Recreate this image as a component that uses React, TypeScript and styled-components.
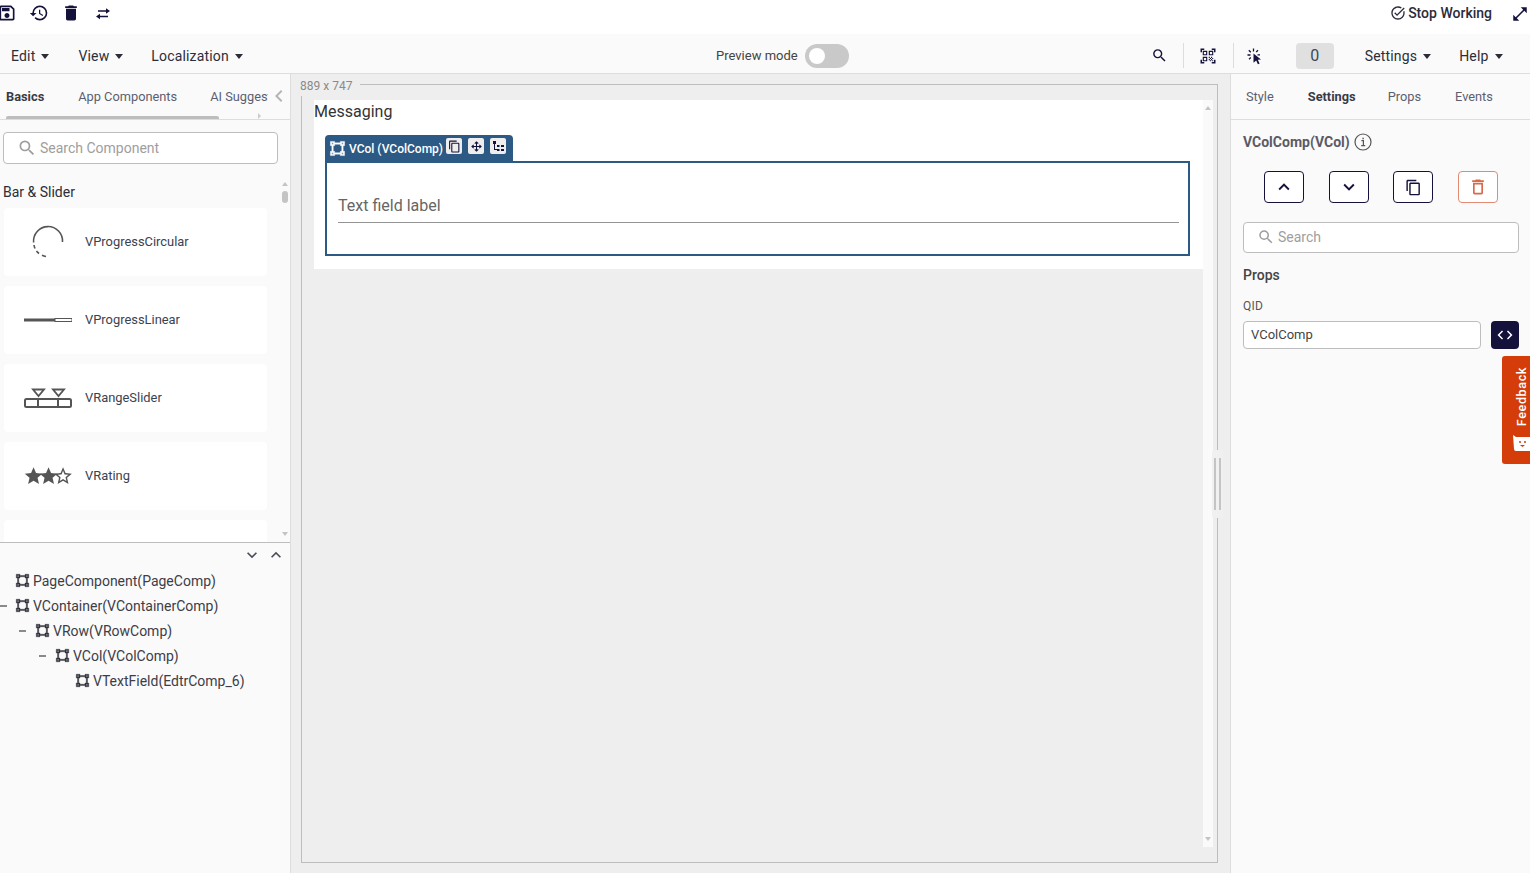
import React from "react";
import styled, { createGlobalStyle } from "styled-components";
import {
  MdOutlineSave, MdHistory, MdDelete, MdSearch, MdOutlineContentCopy, MdDeleteOutline,
  MdKeyboardArrowUp, MdKeyboardArrowDown, MdOpenInFull, MdOutlineTaskAlt, MdCode, MdQrCodeScanner,
  MdChevronLeft,
} from "react-icons/md";

const Global = createGlobalStyle`
  html, body { margin: 0; padding: 0; height: 873px; overflow: hidden; background: #fff; }
  body { font-family: Roboto, "Liberation Sans", sans-serif; color: #333; }
  * { box-sizing: border-box; }
`;

const Page = styled.div`position: relative; width: 1530px; height: 873px; display: flex; flex-direction: column; overflow: hidden;`;
const TopBar = styled.div`height: 34px; flex: none; background: #fff; display: flex; align-items: flex-start; padding: 3px 0 0 0;`;
const TopIcon = styled.span<{ $left: number }>`
  display: flex; width: 20px; height: 20px; align-items: center; justify-content: center; color: #14123a; margin-left: ${(p) => p.$left}px; font-size: 20px;
`;
const StopWorking = styled.div`margin-left: auto; display: flex; align-items: center; height: 20px; font-size: 14px; font-weight: 500; color: #2b2b3a; gap: 2px; margin-right: 38px;`;
const ExpandIcon = styled.span`position: absolute; right: 1px; top: 5px; display: flex; color: #14123a; font-size: 18px;`;

const MenuBar = styled.div`height: 40px; flex: none; background: #fafafa; border-bottom: 1px solid #ddd; display: flex; align-items: center; padding-top: 4px;`;
const MenuLeft = styled.div`flex: 0 0 716px; display: flex; padding-left: 11px;`;
const MenuItem = styled.span<{ $gap?: number }>`
  display: inline-flex; align-items: center; font-size: 14px; color: #2d2d38; margin-right: ${(p) => p.$gap ?? 0}px; white-space: nowrap; letter-spacing: 0.012em;
  &::after { content: ""; margin-left: 6px; margin-top: 2px; border-left: 4.5px solid transparent; border-right: 4.5px solid transparent; border-top: 5px solid #2d2d38; }
`;
const PreviewLabel = styled.span`font-size: 13px; color: #444; margin-right: 7px;`;
const Toggle = styled.span`width: 44px; height: 24px; border-radius: 12px; background: #c9c9c9; display: flex; align-items: center; padding-left: 4px;
  &::before { content: ""; width: 16px; height: 16px; border-radius: 50%; background: #fff; }`;
const MenuRight = styled.div`margin-left: 301px; display: flex; align-items: center; height: 100%;`;
const BarIcon = styled.span<{ $w: number }>`width: ${(p) => p.$w}px; display: flex; justify-content: center; color: #14123a;`;
const VRule = styled.span`width: 1px; height: 25px; background: #ddd;`;
const SearchSpacer = styled.span`width: 13px;`;
const CountBadge = styled.span`width: 38px; height: 26px; margin-left: 19px; margin-right: 31px; border-radius: 4px; background: #e0e0e0; font-size: 16px; color: #3b4a5a; display: flex; align-items: center; justify-content: center;`;

const Body = styled.div`flex: 1; display: flex; min-height: 0;`;

const LeftPanel = styled.aside`width: 291px; flex: none; background: #fafafa; border-right: 1px solid #ddd; display: flex; flex-direction: column;`;
const TabRow = styled.div`position: relative; height: 46px; flex: none; border-bottom: 1px solid #ddd; display: flex; align-items: center; padding-bottom: 1px; overflow: hidden;`;
const Tab = styled.span<{ $active?: boolean; $left: number }>`
  font-size: 12.8px; margin-left: ${(p) => p.$left}px; white-space: nowrap; font-weight: ${(p) => (p.$active ? 700 : 400)}; color: ${(p) => (p.$active ? "#3a3a46" : "#5a6072")};
`;
const ClippedTab = styled(Tab)`width: 58px; overflow: hidden; flex: none;`;
const TabChevron = styled.span`display: flex; color: #b5b5b5; font-size: 24px; margin-left: -1px;`;
const TabScroll = styled.span`position: absolute; left: 6px; bottom: 0; width: 213px; height: 3px; border-radius: 2px 2px 0 0; background: #bdbdbd;`;
const TabScrollArrow = styled.span`position: absolute; left: 258px; bottom: 0; width: 0; height: 0; border-left: 3px solid #ccc; border-top: 3px solid transparent;border-bottom: 3px solid transparent;`;
const SearchWrap = styled.div`padding: 12px 12px 12px 3px; flex: none;`;
const SearchBox = styled.div<{ $h: number }>`
  height: ${(p) => p.$h}px; border: 1px solid #bdbdbd; border-radius: 4px; background: #fff; display: flex; align-items: center; padding: 0 0 1px 13px; gap: 3px; color: #9e9e9e; font-size: 14px;
`;
const ListArea = styled.div`height: 367px; flex: none; display: flex; border-bottom: 1px solid #bdbdbd; overflow: hidden;`;
const ListBody = styled.div`width: 279px; flex: none; padding-left: 3px;`;
const SectionTitle = styled.div`font-size: 14px; color: #2d2d38; height: 32px; line-height: 32px; font-weight: 400;`;
const Card = styled.div`width: 263px; height: 68px; margin: 0 0 10px 1px; background: #fff; border-radius: 4px; display: flex; align-items: center; padding: 0 0 2px 20px; gap: 13px; font-size: 12.9px; color: #3a4250; flex: none;`;
const CardIcon = styled.svg`width: 48px; height: 48px; flex: none; display: block; margin-top: 2px;`;
const Rail = styled.div<{ $bg?: string; $w: number }>`
  position: relative; width: ${(p) => p.$w}px; flex: none; background: ${(p) => p.$bg ?? "transparent"};
`;
const ArrowUp = styled.span`position: absolute; top: 6px; left: 50%; transform: translateX(-50%); border-left: 3.5px solid transparent; border-right: 3.5px solid transparent; border-bottom: 4px solid #c4c4c4;`;
const ArrowDown = styled.span<{ $top?: number }>`position: absolute; ${(p) => (p.$top ? `top: ${p.$top}px;` : "bottom: 6px;")} left: 50%; transform: translateX(-50%); border-left: 3.5px solid transparent; border-right: 3.5px solid transparent; border-top: 4px solid #c4c4c4;`;
const RailThumb = styled.span`position: absolute; left: 3px; top: 15px; width: 6px; height: 12px; border-radius: 3px; background: #c4c4c4;`;

const Tree = styled.div`flex: 1; position: relative; padding-top: 25px;`;
const TreeToggles = styled.div`position: absolute; top: 2px; left: 242px; display: flex; gap: 4px; color: #4a4a58; font-size: 20px;`;
const TreeRow = styled.div<{ $level: number }>`height: 25px; display: flex; align-items: center; padding-left: ${(p) => 15 + p.$level * 20}px; position: relative; font-size: 14px; color: #3d3d48; gap: 3px; white-space: nowrap;`;
const TreeDash = styled.span<{ $shift: number }>`position: absolute; margin-left: ${(p) => p.$shift}px; width: 7px; height: 2px; background: #8a8a8a;`;

const Center = styled.main`flex: 1; background: #eee; display: flex; flex-direction: column; padding: 0 12px 10px 9px; position: relative; min-width: 0;`;
const Ruler = styled.div`height: 22px; flex: none; display: flex;`;
const RulerLabel = styled.span`font-size: 12px; color: #8a8a8a; line-height: 25px; white-space: nowrap;`;
const RulerLine = styled.span`flex: 1; margin: 10px 0 0 8px; border-top: 1px solid #bdbdbd; border-right: 1px solid #bdbdbd;`;
const Frame = styled.div`flex: 1; margin-left: 1px; border: 1px solid #bdbdbd; border-top: 0; display: flex; padding: 4px 4px 15px 12px; min-height: 0;`;
const Canvas = styled.div`width: 889px; flex: none;`;
const Sheet = styled.div`background: #fff; height: 169px; padding: 0 13px 0 11px;`;
const SheetTitle = styled.div`font-size: 16px; color: #333; height: 24px; margin-left: -11px; line-height: 24px;`;
const Selection = styled.div`margin-top: 11px;`;
const SelectionTab = styled.div`width: 188px; height: 26px; background: #2c5a85; border-radius: 4px 4px 0 0; display: flex; align-items: center; padding: 1px 0 0 4px; color: #fff; font-size: 12px; font-weight: 500; white-space: nowrap;`;
const SelectionName = styled.span`margin-left: 3px;`;
const SelectionBtn = styled.span<{ $left: number }>`width: 16px; height: 16px; margin-left: ${(p) => p.$left}px; margin-top: -5px; background: #eee; border-radius: 2px; display: flex; align-items: center; justify-content: center; color: #14123a; font-size: 13px; flex: none;`;
const SelectionBox = styled.div`height: 95px; border: 2px solid #2c5a85; padding: 0 9px 0 11px;`;
const FieldLabel = styled.div`height: 60px; padding-top: 33px; font-size: 16px; line-height: 20px; color: #666; border-bottom: 1px solid #949494;`;
const Handle = styled.div`position: absolute; left: 921px; top: 376px; width: 11px; height: 68px; background: #f0f0f0; display: flex; justify-content: center; align-items: center; gap: 3px; border-radius: 3px;
  &::before, &::after { content: ""; width: 2px; height: 52px; background: #c4c4c4; }`;

const RightPanel = styled.aside`flex: none; width: 300px; background: #fafafa; border-left: 1px solid #ddd; display: flex; flex-direction: column;`;
const RightTabs = styled.div`height: 46px; flex: none; border-bottom: 1px solid #ddd; display: flex; align-items: center; padding-bottom: 1px;`;
const RightBody = styled.div`padding: 0 11px 0 12px;`;
const PanelTitle = styled.div`height: 18px; margin-top: 13px; font-size: 14px; font-weight: 700; color: #5a5a66; display: flex; align-items: center; gap: 4px;`;
const ActionRow = styled.div`margin-top: 20px; margin-left: 21px; display: flex; gap: 25px;`;
const ActionBtn = styled.span<{ $danger?: boolean; $nudge?: number; $size?: number }>`width: 40px; height: 32px; border-radius: 4px; border: 1px solid ${(p) => (p.$danger ? "#e28a72" : "#14123a")}; color: ${(p) => (p.$danger ? "#d9694a" : "#14123a")}; background: #fff; display: flex; align-items: center; justify-content: center; font-size: ${(p) => p.$size ?? 22}px; margin-left: ${(p) => p.$nudge ?? 0}px;`;
const RightSearch = styled.div`margin-top: 19px;`;
const PropsTitle = styled.div`margin-top: 13px; font-size: 14px; font-weight: 500; color: #444; line-height: 18px;`;
const QidLabel = styled.div`margin-top: 14px; font-size: 12px; color: #555; line-height: 16px; letter-spacing: 0.02em;`;
const QidRow = styled.div`margin-top: 7px; display: flex; gap: 10px;`;
const QidInput = styled.div`width: 238px; height: 28px; border: 1px solid #bdbdbd; border-radius: 4px; background: #fff; font-size: 13px; color: #444; display: flex; align-items: center; padding: 0 0 2px 7px;`;
const CodeBtn = styled.span`width: 28px; height: 28px; border-radius: 4px; background: #14123a; color: #fff; display: flex; align-items: center; justify-content: center; font-size: 18px;`;
const Feedback = styled.div`position: absolute; right: 0; top: 356px; width: 28px; height: 108px; background: #d43c0a; border-radius: 3px 0 0 3px; color: #fff; display: flex; flex-direction: column; align-items: center; padding-top: 11px; gap: 9px;`;
const FeedbackText = styled.span`writing-mode: vertical-rl; transform: rotate(180deg); font-size: 12.6px; font-weight: 500; letter-spacing: 0.6px; margin-left: 11px; line-height: 14px;`;
const FeedbackFace = styled.svg`width: 17px; height: 16px; margin-left: 11px; flex: none;`;

const VSQ = "M2,2H8V4H16V2H22V8H20V16H22V22H16V20H8V22H2V16H4V8H2V2M16,8V6H8V8H6V16H8V18H16V16H18V8H16M4,4V6H6V4H4M18,4V6H20V4H18M4,18V20H6V18H4M18,18V20H20V18H18Z";
const Vector = ({ size = 15, color = "#33333f" }: { size?: number; color?: string }) => (
  <svg width={size} height={size} viewBox="0 0 24 24" fill={color} stroke={color} strokeWidth="0.6" style={{ flex: "none" }}><path d={VSQ} /></svg>
);
const STAR = "M12,17.27L18.18,21L16.54,13.97L22,9.24L14.81,8.62L12,2L9.19,8.62L2,9.24L7.45,13.97L5.82,21L12,17.27Z";
const STARO = "M12,15.39L8.24,17.66L9.23,13.38L5.91,10.5L10.29,10.13L12,6.09L13.71,10.13L18.09,10.5L14.77,13.38L15.76,17.66M22,9.24L14.81,8.62L12,2L9.19,8.62L2,9.24L7.45,13.97L5.82,21L12,17.27L18.18,21L16.54,13.97L22,9.24Z";

const ClickIcon = () => (
  <svg width="18" height="18" viewBox="0 0 18 18" fill="#14123a">
    <path d="M7.5 6.5 L15 12.4 L11.8 12.8 L13.6 16.4 L11.9 17.2 L10.2 13.6 L7.5 15.8Z" />
    <path d="M7.5 1.5v3M2.8 3.2l2 2M1.5 8h3M3 12.2l1.8-1.6M12 3.2l-1.8 1.8M14 7.8h-2.5" stroke="#14123a" strokeWidth="1.3" fill="none" />
  </svg>
);

export default function App() {
  return (
    <Page>
      <Global />
      <TopBar>
        <TopIcon $left={-3}><MdOutlineSave /></TopIcon>
        <TopIcon $left={12}><MdHistory /></TopIcon>
        <TopIcon $left={12}><MdDelete /></TopIcon>
        <TopIcon $left={12}>
          <svg width="18" height="18" viewBox="0 0 18 18" fill="#14123a">
            <path d="M4 6.2 H12 V4.2 L16 7 L12 9.8 V7.8 H4Z" />
            <path d="M14 11.7 H6 V9.7 L2 12.5 L6 15.3 V13.3 H14Z" />
          </svg>
        </TopIcon>
        <StopWorking><MdOutlineTaskAlt size={16} /> Stop Working</StopWorking>
        <ExpandIcon><MdOpenInFull /></ExpandIcon>
      </TopBar>
      <MenuBar>
        <MenuLeft>
          <MenuItem $gap={29}>Edit</MenuItem>
          <MenuItem $gap={28}>View</MenuItem>
          <MenuItem>Localization</MenuItem>
        </MenuLeft>
        <PreviewLabel>Preview mode</PreviewLabel>
        <Toggle />
        <MenuRight>
          <BarIcon $w={20}><MdSearch size={17} /></BarIcon>
          <SearchSpacer />
          <VRule />
          <BarIcon $w={49}><MdQrCodeScanner size={18} /></BarIcon>
          <VRule />
          <BarIcon $w={43}><ClickIcon /></BarIcon>
          <CountBadge>0</CountBadge>
          <MenuItem $gap={28}>Settings</MenuItem>
          <MenuItem>Help</MenuItem>
        </MenuRight>
      </MenuBar>
      <Body>
        <LeftPanel>
          <TabRow>
            <Tab $active $left={6}>Basics</Tab>
            <Tab $left={34}>App Components</Tab>
            <ClippedTab $left={33}>AI Suggestions</ClippedTab>
            <TabChevron><MdChevronLeft /></TabChevron>
            <TabScroll />
            <TabScrollArrow />
          </TabRow>
          <SearchWrap>
            <SearchBox $h={32}><MdSearch size={20} />Search Component</SearchBox>
          </SearchWrap>
          <ListArea>
            <ListBody>
              <SectionTitle>Bar &amp; Slider</SectionTitle>
              <Card>
                <CardIcon viewBox="0 0 48 48">
                  <path d="M38.5 24 A14.5 14.5 0 1 0 9.6 24.5" fill="none" stroke="#555" strokeWidth="1.6" />
                  <path d="M10 27 A14.5 14.5 0 0 0 11 30.5 M12.5 33 A14.5 14.5 0 0 0 15 35.5 M18 37.2 A14.5 14.5 0 0 0 22 38.5" fill="none" stroke="#555" strokeWidth="1.6" />
                </CardIcon>
                VProgressCircular
              </Card>
              <Card>
                <CardIcon viewBox="0 0 48 48">
                  <rect x="0" y="22.5" width="31" height="3" fill="#555" />
                  <rect x="31" y="22.5" width="17" height="3" fill="#fff" stroke="#555" strokeWidth="1" />
                </CardIcon>
                VProgressLinear
              </Card>
              <Card>
                <CardIcon viewBox="0 0 48 48">
                  <rect x="1" y="25" width="46" height="8" rx="1.5" fill="none" stroke="#555" strokeWidth="2" />
                  <path d="M14 25v8M34 25v8" stroke="#555" strokeWidth="2" />
                  <path d="M9 15.5h11l-5.5 6.5Z M29 15.5h11l-5.5 6.5Z" fill="none" stroke="#555" strokeWidth="1.8" />
                </CardIcon>
                VRangeSlider
              </Card>
              <Card>
                <CardIcon viewBox="0 0 48 48">
                  <g transform="translate(-1 13.5) scale(.88)"><path d={STAR} fill="#555" /></g>
                  <g transform="translate(14 13.5) scale(.88)"><path d={STAR} fill="#555" /></g>
                  <g transform="translate(28.5 13.5) scale(.88)"><path d={STARO} fill="#555" /></g>
                </CardIcon>
                VRating
              </Card>
              <Card />
            </ListBody>
            <Rail $w={11}>
              <ArrowUp />
              <RailThumb />
              <ArrowDown $top={356} />
            </Rail>
          </ListArea>
          <Tree>
            <TreeToggles>
              <MdKeyboardArrowDown /><MdKeyboardArrowUp />
            </TreeToggles>
            <TreeRow $level={0}><Vector />PageComponent(PageComp)</TreeRow>
            <TreeRow $level={0}><TreeDash $shift={-15} /><Vector />VContainer(VContainerComp)</TreeRow>
            <TreeRow $level={1}><TreeDash $shift={-16} /><Vector />VRow(VRowComp)</TreeRow>
            <TreeRow $level={2}><TreeDash $shift={-16} /><Vector />VCol(VColComp)</TreeRow>
            <TreeRow $level={3}><Vector />VTextField(EdtrComp_6)</TreeRow>
          </Tree>
        </LeftPanel>
        <Center>
          <Ruler>
            <RulerLabel>889 x 747</RulerLabel>
            <RulerLine />
          </Ruler>
          <Frame>
            <Canvas>
              <Sheet>
                <SheetTitle>Messaging</SheetTitle>
                <Selection>
                  <SelectionTab>
                    <Vector size={17} color="#fff" />
                    <SelectionName>VCol (VColComp)</SelectionName>
                    <SelectionBtn $left={3}><MdOutlineContentCopy /></SelectionBtn>
                    <SelectionBtn $left={6}>
                      <svg width="13" height="13" viewBox="0 0 24 24" fill="#14123a"><path d="M13,11H18L16.5,9.5L17.92,8.08L21.84,12L17.92,15.92L16.5,14.5L18,13H13V18L14.5,16.5L15.92,17.92L12,21.84L8.08,17.92L9.5,16.5L11,18V13H6L7.5,14.5L6.08,15.92L2.16,12L6.08,8.08L7.5,9.5L6,11H11V6L9.5,7.5L8.08,6.08L12,2.16L15.92,6.08L14.5,7.5L13,6V11Z" /></svg>
                    </SelectionBtn>
                    <SelectionBtn $left={6}>
                      <svg width="13" height="13" viewBox="0 0 13 13" fill="#14123a"><path d="M1 1h3v3H1z M2 4h1v5h2v1H2z M5 5h2.5v2H5z M9 5h3v2H9z M5 9h2.5v2H5z M9 9h3v2H9z" /></svg>
                    </SelectionBtn>
                  </SelectionTab>
                  <SelectionBox>
                    <FieldLabel>Text field label</FieldLabel>
                  </SelectionBox>
                </Selection>
              </Sheet>
            </Canvas>
            <Rail $w={10} $bg="#fafafa">
              <ArrowUp />
              <ArrowDown />
            </Rail>
          </Frame>
          <Handle />
        </Center>
        <RightPanel>
          <RightTabs>
            <Tab $left={15}>Style</Tab>
            <Tab $active $left={34}>Settings</Tab>
            <Tab $left={32}>Props</Tab>
            <Tab $left={34}>Events</Tab>
          </RightTabs>
          <RightBody>
            <PanelTitle>
              VColComp(VCol)
              <svg width="18" height="18" viewBox="0 0 18 18" fill="none" stroke="#555" strokeWidth="1.2">
                <circle cx="9" cy="9" r="8" />
                <path d="M7.4 7.6h2v5M7.2 12.7h4" />
                <path d="M8.4 4.8h1.4v1.4H8.4z" fill="#555" stroke="none" />
              </svg>
            </PanelTitle>
            <ActionRow>
              <ActionBtn><MdKeyboardArrowUp /></ActionBtn>
              <ActionBtn><MdKeyboardArrowDown /></ActionBtn>
              <ActionBtn $nudge={-1} $size={17}><MdOutlineContentCopy /></ActionBtn>
              <ActionBtn $danger $size={20}><MdDeleteOutline /></ActionBtn>
            </ActionRow>
            <RightSearch>
              <SearchBox $h={31}><MdSearch size={18} />Search</SearchBox>
            </RightSearch>
            <PropsTitle>Props</PropsTitle>
            <QidLabel>QID</QidLabel>
            <QidRow>
              <QidInput>VColComp</QidInput>
              <CodeBtn><MdCode /></CodeBtn>
            </QidRow>
          </RightBody>
        </RightPanel>
      </Body>
      <Feedback>
        <FeedbackText>Feedback</FeedbackText>
        <FeedbackFace viewBox="0 0 17 16">
          <path d="M0 0 L3 2 H17 V16 H3 A2 2 0 0 1 1 14Z" fill="#fff" />
          <circle cx="7" cy="7" r="1" fill="#d43c0a" />
          <circle cx="12" cy="7" r="1" fill="#d43c0a" />
          <path d="M7 10h5l-2.5 2Z" fill="#d43c0a" />
        </FeedbackFace>
      </Feedback>
    </Page>
  );
}
